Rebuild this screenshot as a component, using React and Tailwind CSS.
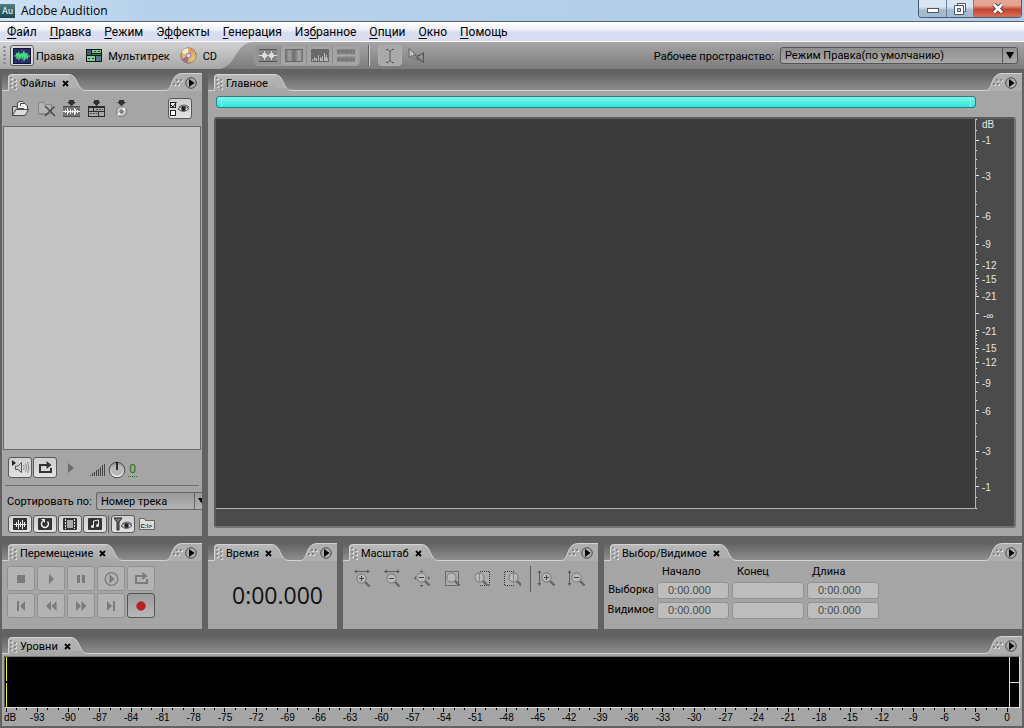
import React, { useState } from "react";

const MENU = [
  ["", "Ф", "айл"],
  ["", "П", "равка"],
  ["", "Р", "ежим"],
  ["Э", "ф", "фекты"],
  ["", "Г", "енерация"],
  ["Из", "б", "ранное"],
  ["", "О", "пции"],
  ["", "О", "кно"],
  ["", "П", "омощь"],
];

// amplitude ruler, one half; the other half is mirrored
const MAJOR_DB = [1, 3, 6, 9, 12, 15, 21];
const MINOR_DB = [0, 0.5, 1.5, 2, 2.5, 4, 5, 7, 8, 10, 11, 13, 14, 16, 17, 18, 19, 20];

function dbToPercent(db, sign) {
  return 50 - sign * 50 * Math.pow(10, -db / 20);
}

/* ---------- icons ---------- */

function Grip() {
  return (
    <svg width="10" height="14" shapeRendering="crispEdges" className="shrink-0">
      {[[1, 1], [1, 5], [1, 9], [5, 3], [5, 7], [5, 11]].map(([x, y]) => (
        <g key={x + "-" + y}>
          <rect x={x + 1} y={y + 1} width="2" height="2" fill="#dedede" />
          <rect x={x} y={y} width="2" height="2" fill="#8c8c8c" />
        </g>
      ))}
    </svg>
  );
}

function EditViewIcon() {
  return (
    <svg width="18" height="16">
      <rect x="0.5" y="0.5" width="17" height="15" fill="#2b2c6b" stroke="#141433" />
      <path d="M9 1V15" stroke="#46489a" />
      <path d="M1 8H3L4 5V11L5 7L6 4V12L7 6V10L8 7L9 5V11L10 7L11 3V13L12 5V11L13 7L14 5V11L15 8H17" fill="none" stroke="#43e079" strokeWidth="1.2" />
    </svg>
  );
}

function MultitrackIcon() {
  return (
    <svg width="16" height="13" shapeRendering="crispEdges">
      <rect width="16" height="13" fill="#161616" />
      <rect x="1" y="1" width="4" height="5" fill="#41597c" />
      <rect x="6" y="1" width="9" height="3" fill="#78c48e" />
      <rect x="8" y="2" width="2" height="1" fill="#1d4d2b" />
      <rect x="12" y="2" width="2" height="1" fill="#1d4d2b" />
      <rect x="6" y="5" width="9" height="1" fill="#4c7f5b" />
      <rect x="1" y="7" width="8" height="5" fill="#86c99a" />
      <rect x="2" y="9" width="2" height="1" fill="#1d4d2b" />
      <rect x="6" y="9" width="2" height="1" fill="#1d4d2b" />
      <rect x="10" y="7" width="5" height="5" fill="#55788a" />
    </svg>
  );
}

function CdIcon() {
  return (
    <svg width="17" height="17" viewBox="0 0 17 17">
      <circle cx="8.5" cy="8.5" r="7.6" fill="#e0b868" stroke="#6a5a3a" strokeWidth="0.8" />
      <path d="M8.5 8.5L1.5 5.5A7.6 7.6 0 0 1 8 1Z" fill="#f6e9c9" />
      <path d="M8.5 8.5L9 1A7.5 7.5 0 0 1 15 5Z" fill="#e8946a" />
      <path d="M8.5 8.5L15.8 8A7.5 7.5 0 0 1 10 15.8Z" fill="#e8bc68" />
      <path d="M8.5 8.5L8 16A7.5 7.5 0 0 1 2 12Z" fill="#a06c90" />
      <circle cx="8.5" cy="8.5" r="2.4" fill="#d7d7e6" stroke="#75688a" strokeWidth="0.8" />
    </svg>
  );
}

function ViewIcon({ kind }) {
  return (
    <svg width="18" height="13">
      <defs>
        <linearGradient id="pan">
          <stop offset="0" stopColor="#6c6c6c" />
          <stop offset="0.25" stopColor="#a0a0a0" />
          <stop offset="0.5" stopColor="#6c6c6c" />
          <stop offset="0.8" stopColor="#a8a8a8" />
          <stop offset="1" stopColor="#6c6c6c" />
        </linearGradient>
      </defs>
      {kind === "wave" && (
        <g>
          <path d="M0 0.5H18M0 12.5H18" stroke="#555" />
          <rect y="1" width="18" height="11" fill="#858585" />
          <path d="M0 6.5H18M3.5 5V8M4.5 4V9M5.5 2V11M6.5 4V9M7.5 5V8M10.5 5V8M11.5 4V9M12.5 2V11M13.5 4V9M14.5 5V8" stroke="#dcdcdc" />
        </g>
      )}
      {kind === "freq" && (
        <g>
          <rect width="18" height="13" fill="url(#pan)" />
          <path d="M0 0.5H18M0 12.5H18" stroke="#666" />
        </g>
      )}
      {kind === "pan" && (
        <g>
          <rect width="18" height="13" fill="#686868" />
          <path d="M1.5 12V10M3.5 12V8M5.5 12V9M7.5 12V6M9.5 12V8M11.5 12V7M13.5 12V4M15.5 12V6M16.5 12V9M4.5 11V9.5M10.5 12V9.5M14.5 12V8" stroke="#b5b5b5" />
        </g>
      )}
      {kind === "phase" && (
        <g>
          <rect width="18" height="13" fill="#858585" />
          <path d="M0 2.5H18M0 10.5H18" stroke="#747474" strokeWidth="2" strokeDasharray="3 1" />
          <path d="M0 6.5H18" stroke="#a8a8a8" strokeWidth="2" />
        </g>
      )}
    </svg>
  );
}

function IBeamIcon() {
  return (
    <svg width="10" height="16" fill="none" stroke="#5a5a5a">
      <path d="M1 1.5H3L5 3.5L7 1.5H9M5 3V13M1 14.5H3L5 12.5L7 14.5H9" />
    </svg>
  );
}

function ScrubIcon() {
  return (
    <svg width="17" height="16">
      <path d="M1 0.5V9.5L3.5 7.5L5.5 11.5L7 10.5L5 7H8Z" fill="#c2c2c2" stroke="#606060" />
      <path d="M9 7.5H11L15.5 4.5V14.5L11 11.5H9Z" fill="#777" stroke="#555" />
      <path d="M11 8.5L14.5 6.5V12.5Z" fill="#9c9c9c" />
    </svg>
  );
}

function OpenIcon() {
  return (
    <svg width="19" height="17" stroke="#4a4a4a">
      <path d="M6.5 8V2.5L9 1.5H12L14.5 4.5V10" fill="#efefef" />
      <path d="M9.5 6V3.5H14L16.5 6V12" fill="#f2f2f2" />
      <path d="M1.5 15.5V6.5H5.5L6.5 8.5H12.5V15.5Z" fill="#c2c2c2" />
      <path d="M1.5 15.5L5 9.5H17.5L14 15.5Z" fill="#dcdcdc" />
    </svg>
  );
}

function RemoveFileIcon() {
  return (
    <svg width="19" height="17">
      <path d="M1.5 13.5V2.5H6.5L8 4.5H14.5V13.5Z" fill="#b4b4b4" stroke="#858585" />
      <path d="M2 14.5H12" stroke="#888" />
      <path d="M8 6L18 16M17.5 6.5L8 16" stroke="#4a4a4a" strokeWidth="1.5" />
    </svg>
  );
}

function InsertArrow() {
  return <path d="M6 0H11V2H13L8.5 6L4 2H6Z" fill="#303030" />;
}

function InsertEditIcon() {
  return (
    <svg width="17" height="17">
      <rect y="6" width="17" height="11" fill="#747474" />
      <path d="M0 6.5H17M0 16.5H17" stroke="#505050" />
      <InsertArrow />
      <path d="M0 11.5H17M2.5 10V13M4.5 8V15M5.5 10V13M7.5 9V14M9.5 10V13M11.5 8V15M12.5 9V14M14.5 10V13" stroke="#f2f2f2" />
    </svg>
  );
}

function InsertMultitrackIcon() {
  return (
    <svg width="17" height="17" shapeRendering="crispEdges">
      <rect y="6" width="17" height="11" fill="#2a2a2a" />
      <InsertArrow />
      <path d="M1 8H5V11H1ZM6 8H16V11H6ZM1 12H10V16H1ZM11 12H16V16H11Z" fill="#a8a8a8" />
      <path d="M8 9.5H15M2 13.5H9" stroke="#444" strokeDasharray="2 1" />
    </svg>
  );
}

function InsertCdIcon() {
  return (
    <svg width="17" height="17">
      <circle cx="8.5" cy="11.5" r="5" fill="#c8c8c8" stroke="#777" />
      <path d="M8.5 11.5L12 8M8.5 11.5L5 15" stroke="#f0f0f0" strokeWidth="2" />
      <circle cx="8.5" cy="11.5" r="1.5" fill="#999" stroke="#555" />
      <InsertArrow />
    </svg>
  );
}

function EyeShape() {
  return (
    <g>
      <path d="M0 5Q5 0 11 4.5Q6 10 0 5Z" fill="#ddd" stroke="#444" />
      <path d="M1 3Q6 -1 11 3" fill="none" stroke="#555" />
      <circle cx="5.5" cy="4.8" r="2.3" fill="#222" />
    </g>
  );
}

function OptionsIcon() {
  return (
    <svg width="20" height="16">
      <rect x="0.5" y="1.5" width="5" height="5" fill="#fff" stroke="#222" />
      <path d="M1 4L3 6L6.5 1" fill="none" stroke="#111" />
      <rect x="0.5" y="9.5" width="5" height="5" fill="#fff" stroke="#222" />
      <g transform="translate(8 3)">
        <EyeShape />
      </g>
    </svg>
  );
}

function SpeakerIcon() {
  return (
    <svg width="19" height="15">
      <path d="M1 0L5 3L1 6Z" fill="#222" />
      <path d="M4.5 6H7L10.5 2.5V12.5L7 9.5H4.5Z" fill="#ccc" stroke="#555" />
      <path d="M12.5 5Q14 7.5 12.5 10M14.5 3.5Q17 7.5 14.5 11.5M16.5 2Q19.5 7.5 16.5 13" fill="none" stroke="#888" />
    </svg>
  );
}

function LoopIcon({ color = "#333" }) {
  return (
    <svg width="15" height="13" viewBox="0 0 15 13">
      <path d="M1 11H14M2 12V4H10M13 12V7" fill="none" stroke={color} strokeWidth="2" />
      <path d="M8.5 0L13.5 4L8.5 8Z" fill={color} />
    </svg>
  );
}

function KnobIcon() {
  return (
    <svg width="18" height="18">
      <defs>
        <linearGradient id="knob" x1="0" y1="0" x2="0" y2="1">
          <stop offset="0" stopColor="#8d8d8d" />
          <stop offset="1" stopColor="#f6f6f6" />
        </linearGradient>
      </defs>
      <circle cx="9" cy="9" r="7.8" fill="url(#knob)" stroke="#4c4c4c" />
      <circle cx="9" cy="9" r="5.5" fill="#b9b9b9" />
      <path d="M9 1V9" stroke="#000" strokeWidth="1.5" />
    </svg>
  );
}

function FilterIcon({ kind }) {
  return (
    <svg width="16" height="14">
      <rect x="1" y="1" width="14" height="12" rx="1" fill="#333" />
      {kind === "audio" && <path d="M2 7.5H14M4.5 5V10M6.5 3V12M8.5 5V10M10.5 3V12M12.5 5V10" stroke="#eee" />}
      {kind === "loop" && (
        <g>
          <path d="M10.5 4.5A3.5 3.5 0 1 1 6 4" fill="none" stroke="#eee" strokeWidth="1.5" />
          <path d="M4 2H8V6Z" fill="#eee" />
        </g>
      )}
      {kind === "video" && (
        <g>
          <rect x="5" y="3" width="6" height="8" fill="#aaa" />
          <path d="M3.5 2V12M12.5 2V12" stroke="#eee" strokeDasharray="2 1" />
        </g>
      )}
      {kind === "midi" && (
        <g fill="#eee">
          <path d="M6.5 9V4L11.5 3V8" fill="none" stroke="#eee" />
          <circle cx="5.5" cy="9.5" r="1.5" />
          <circle cx="10.5" cy="8.5" r="1.5" />
        </g>
      )}
    </svg>
  );
}

function FunnelEyeIcon() {
  return (
    <svg width="20" height="15">
      <path d="M1 1H9L6 5V13H4V5Z" fill="#777" stroke="#222" />
      <g transform="translate(8 4)">
        <EyeShape />
      </g>
    </svg>
  );
}

function TransportIcon({ kind }) {
  const c = "#7b7b7b";
  return (
    <svg width="17" height="16" fill={c}>
      {kind === "stop" && <path d="M4 4H12V12H4Z" />}
      {kind === "play" && <path d="M6 3L11 8L6 13Z" />}
      {kind === "pause" && <path d="M4 4H7V12H4ZM9 4H12V12H9Z" />}
      {kind === "playto" && (
        <g>
          <circle cx="8.5" cy="8" r="6.3" fill="none" stroke={c} strokeWidth="1.3" />
          <path d="M6.5 3.5L11.5 8L6.5 12.5Z" />
        </g>
      )}
      {kind === "start" && <path d="M4 3H6V13H4ZM12 3V13L7 8Z" />}
      {kind === "rew" && <path d="M8 3V13L3 8ZM13.5 3V13L8.5 8Z" />}
      {kind === "ff" && <path d="M3 3V13L8 8ZM8.5 3V13L13.5 8Z" />}
      {kind === "end" && <path d="M4 3V13L9 8ZM10 3H12V13H10Z" />}
      {kind === "rec" && <circle cx="8" cy="8" r="4.3" fill="#c01f1f" stroke="#9b1a1a" strokeWidth="0.6" />}
    </svg>
  );
}

function Lens({ x, y, sign }) {
  return (
    <g>
      <path d={`M${x + 3.5} ${y + 3.5}L${x + 8} ${y + 8}`} stroke="#666" strokeWidth="2.4" />
      <circle cx={x} cy={y} r="4.6" fill="#b9b9b9" stroke="#757575" />
      {sign && <path d={`M${x - 2.5} ${y}H${x + 2.5}`} stroke="#444" />}
      {sign === "+" && <path d={`M${x} ${y - 2.5}V${y + 2.5}`} stroke="#444" />}
    </g>
  );
}

function ZoomIcon({ kind }) {
  const c = "#5e5e5e";
  return (
    <svg width="18" height="19">
      {(kind === "hin" || kind === "hout") && (
        <g>
          <path d="M2 2.5H16" stroke={c} />
          <path d="M1 2.5L4 0.5V4.5ZM17 2.5L14 0.5V4.500Z" fill={c} />
          <Lens x={8.5} y={9.5} sign={kind === "hin" ? "+" : "-"} />
        </g>
      )}
      {kind === "full" && (
        <g>
          <path d="M8.5 1L10.5 3H6.5ZM8.5 18L6.5 16H10.5ZM1 9L3 7V11ZM17 9L15 7V11Z" fill={c} />
          <Lens x={8.5} y={8.5} sign="-" />
        </g>
      )}
      {kind === "sel" && (
        <g>
          <rect x="2.5" y="2.5" width="13" height="14" fill="#acacac" stroke="#333" strokeDasharray="1 1" />
          <Lens x={8.5} y={8.5} />
        </g>
      )}
      {kind === "left" && (
        <g>
          <path d="M7 2.5H16.5V16.5H7" fill="#acacac" stroke="#333" strokeDasharray="1 1" />
          <Lens x={6.5} y={8.5} />
          <path d="M6.5 4.5V12.5" stroke="#555" strokeDasharray="1 1" />
        </g>
      )}
      {kind === "right" && (
        <g>
          <path d="M11 2.5H1.5V16.5H11" fill="#acacac" stroke="#333" strokeDasharray="1 1" />
          <Lens x={10.5} y={8.5} />
          <path d="M10.5 4.5V12.5" stroke="#555" strokeDasharray="1 1" />
        </g>
      )}
      {(kind === "vin" || kind === "vout") && (
        <g>
          <path d="M2.5 3V15" stroke={c} />
          <path d="M2.5 1L4.5 4H0.5ZM2.5 17L0.5 14H4.5Z" fill={c} />
          <Lens x={9.5} y={8.5} sign={kind === "vin" ? "+" : "-"} />
        </g>
      )}
    </svg>
  );
}

/* ---------- panel frame ---------- */

function Panel({ title, closable = true, className = "", children }) {
  return (
    <section className={"flex min-w-0 flex-col " + className}>
      <header className="flex h-[18px] shrink-0 items-end bg-linear-to-b from-[#626262] to-[#919191]">
        <div className="h-px w-1.5 shrink-0 bg-[#d2d2d2]" />
        <div className="flex h-[17px] shrink-0 items-center gap-px rounded-tl-sm border-t border-l border-[#d2d2d2] bg-linear-to-b from-[#bababa] to-[#a5a5a5]">
          <Grip />
          <h2 className="whitespace-nowrap pt-0.5 text-[11px] leading-4 text-black">{title}</h2>
          {closable ? (
            <button aria-label="Закрыть" className="ml-[5px] flex h-4 w-[7px] items-center">
              <svg width="7" height="7" stroke="#000" strokeWidth="1.8">
                <path d="M1 1L6 6M6 1L1 6" />
              </svg>
            </button>
          ) : (
            <span className="w-1.5" />
          )}
        </div>
        <svg width="16" height="18" className="shrink-0">
          <path d="M0 1.5C9 1.5 8 17.5 16 17.5V18H0Z" fill="#b0b0b0" />
          <path d="M0 1.5C9 1.5 8 17.5 16 17.5" fill="none" stroke="#d2d2d2" />
          <path d="M0 18V15H11L14 18Z" fill="#a7a7a7" />
        </svg>
        <div className="h-px min-w-0 flex-1 bg-[#d2d2d2]" />
        <button aria-label="Меню панели" className="shrink-0">
          <svg width="36" height="18" className="block">
            <path d="M0 17.5C7 17.5 4 0.5 16 0.5H36V18H0Z" fill="#aeaeae" />
            <path d="M0 17.5C7 17.5 4 0.5 16 0.5H36" fill="none" stroke="#d2d2d2" />
            <g shapeRendering="crispEdges">
              {[[7, 10], [11, 10], [10, 6], [14, 6]].map(([x, y]) => (
                <g key={x}>
                  <rect x={x + 1} y={y + 1} width="2" height="2" fill="#dedede" />
                  <rect x={x} y={y} width="2" height="2" fill="#858585" />
                </g>
              ))}
            </g>
            <circle cx="25" cy="10" r="5.3" fill="#a9a9a9" stroke="#4e4e4e" />
            <path d="M23 6L28.5 10L23 14Z" fill="#000" />
          </svg>
        </button>
      </header>
      <div className="min-h-0 min-w-0 flex-1 bg-[#a5a5a5]">{children}</div>
    </section>
  );
}

/* ---------- bars on top ---------- */

function TitleBar() {
  return (
    <div className="flex h-[22px] items-start justify-between border-b border-[#56616d] bg-linear-to-r from-[#cfe2f4] from-0% via-[#b4d0eb] via-15% to-[#b2cfea]">
      <div className="flex items-center gap-1.5 pt-1">
        <span className="flex h-[14px] w-[15px] items-center justify-center bg-linear-to-b from-[#4f7f88] to-[#1f4650] text-[9px] leading-3 text-white">Au</span>
        <h1 className="font-['Open_Sans',sans-serif] text-[12px] leading-[14px] text-black">Adobe Audition</h1>
      </div>
      <div className="mr-0.5 flex h-[18px] overflow-hidden rounded-b border border-t-0 border-[#4c5d70]">
        <button aria-label="Свернуть" className="flex w-7 items-center justify-center border-r border-[#6c8096] bg-linear-to-b from-[#d9e5f1] from-40% to-[#a4bad0] to-60%">
          <svg width="12" height="5" className="mt-1">
            <rect x="0.5" y="0.5" width="11" height="4" fill="#fff" stroke="#4d5666" />
          </svg>
        </button>
        <button aria-label="Развернуть" className="flex w-[27px] items-center justify-center border-r border-[#6c8096] bg-linear-to-b from-[#d9e5f1] from-40% to-[#a4bad0] to-60%">
          <svg width="12" height="12" fill="#fff" stroke="#4d5666">
            <path d="M3.5 0.5H11.5V8.5H3.5Z" />
            <path d="M0.5 2.5H9.5V11.5H0.5Z" />
            <path d="M3.5 5.5H6.5V8.5H3.5Z" fill="#c8d6e6" />
          </svg>
        </button>
        <button aria-label="Закрыть окно" className="flex w-[47px] items-center justify-center bg-linear-to-b from-[#e5a696] from-30% via-[#c2432c] via-55% to-[#d8705a]">
          <svg width="12" height="11">
            <path d="M2 1.5L10 9.5M10 1.5L2 9.5" stroke="#4b3038" strokeWidth="4.5" />
            <path d="M2 1.5L10 9.5M10 1.5L2 9.5" stroke="#fff" strokeWidth="2.8" />
          </svg>
        </button>
      </div>
    </div>
  );
}

function MenuBar() {
  return (
    <nav className="flex h-5 items-center border-b border-[#f8f8f8] bg-linear-to-b from-white from-5% via-[#eef1f9] via-40% to-[#d9ddf1] to-55% font-['Roboto',sans-serif] text-[12px] leading-4 text-black">
      {MENU.map(([before, key, after]) => (
        <a key={key + after} href="#" className="pr-1.5 pl-[7px]">
          {before}
          <span className="underline underline-offset-2">{key}</span>
          {after}
        </a>
      ))}
    </nav>
  );
}

function Toolbar() {
  const [view, setView] = useState("wave");

  return (
    <div className="flex h-[27px] bg-linear-to-b from-[#a6a6a6] to-[#7c7c7c] text-black">
      <div className="flex items-center bg-linear-to-b from-[#d2d2d2] to-[#a6a6a6] pl-[3px]">
        <svg width="3" height="20" className="mr-1">
          <path d="M1.5 0V20" stroke="#808080" strokeWidth="2" strokeDasharray="2 2" />
        </svg>
        <button className="flex items-center gap-0.5">
          <span className="flex h-[21px] w-6 items-center justify-center rounded-[3px] border border-[#5c5c5c] bg-[#d8d8d8]">
            <EditViewIcon />
          </span>
          <span className="pt-0.5">Правка</span>
        </button>
        <button className="ml-3 flex items-center gap-1.5">
          <MultitrackIcon />
          <span className="pt-0.5">Мультитрек</span>
        </button>
        <button className="ml-2.5 flex items-center gap-1.5">
          <CdIcon />
          <span className="pt-0.5">CD</span>
        </button>
      </div>
      <svg width="37" height="27" className="shrink-0">
        <defs>
          <linearGradient id="swoosh" x1="0" y1="0" x2="0" y2="1">
            <stop offset="0" stopColor="#d2d2d2" />
            <stop offset="1" stopColor="#a6a6a6" />
          </linearGradient>
        </defs>
        <path d="M0 0H37C17 0 20 27 0 27Z" fill="url(#swoosh)" />
      </svg>
      <div className="flex items-center">
        <div className="flex h-[21px] overflow-hidden rounded border border-[#9c9c9c]">
          {["wave", "freq", "pan", "phase"].map((k) => (
            <button
              key={k}
              aria-label={k}
              onClick={() => setView(k)}
              className={
                "flex w-[26px] items-center justify-center border-r border-[#8c8c8c] last:border-r-0 " +
                (view === k ? "bg-[#949494]" : "bg-[#a4a4a4]")
              }
            >
              <ViewIcon kind={k} />
            </button>
          ))}
        </div>
        <div className="ml-2 h-[21px] w-0.5 border-l border-[#606060] bg-[#d0d0d0]" />
        <button aria-label="Выделение" className="ml-2 flex h-[21px] w-6 items-center justify-center rounded border border-[#b0b0b0] bg-[#a9a9a9]">
          <IBeamIcon />
        </button>
        <button aria-label="Скраб" className="ml-1.5">
          <ScrubIcon />
        </button>
      </div>
      <div className="ml-auto flex items-center gap-1.5 pr-1.5">
        <label htmlFor="workspace" className="pt-0.5">Рабочее пространство:</label>
        <div className="relative">
          <select
            id="workspace"
            className="block h-[17px] w-[238px] appearance-none rounded-[3px] border border-[#555] bg-linear-to-b from-[#8f8f8f] to-[#a9a9a9] pt-px pl-1 text-[11px] leading-[14px]"
          >
            <option>Режим Правка(по умолчанию)</option>
          </select>
          <span className="pointer-events-none absolute inset-y-px right-px flex w-[15px] items-center justify-center border-l border-[#555]">
            <svg width="8" height="7">
              <path d="M0 0H8L4 7Z" />
            </svg>
          </span>
        </div>
      </div>
    </div>
  );
}

/* ---------- panels ---------- */

const LIGHT_BTN = "flex items-center justify-center rounded-[3px] border border-[#5a5a5a] bg-linear-to-b from-[#cfcfcf] to-[#e2e2e2]";

function FilesPanel() {
  return (
    <Panel title="Файлы" className="w-[200px]">
      <div className="flex h-full flex-col">
        <div className="flex h-[35px] shrink-0 items-center gap-2 pr-2.5 pl-[9px]">
          <button aria-label="Открыть файл"><OpenIcon /></button>
          <button aria-label="Закрыть файл" className="-ml-px"><RemoveFileIcon /></button>
          <button aria-label="В правку" className="-ml-px"><InsertEditIcon /></button>
          <button aria-label="В мультитрек"><InsertMultitrackIcon /></button>
          <button aria-label="На CD"><InsertCdIcon /></button>
          <button aria-label="Параметры" className={LIGHT_BTN + " ml-auto h-[21px] w-6"}><OptionsIcon /></button>
        </div>
        <div className="mx-px flex-1 border border-[#6a6a6a] bg-[#c3c3c3]" />
        <div className="flex h-[35px] shrink-0 items-center pl-1.5">
          <button aria-label="Автовоспроизведение" className={LIGHT_BTN + " h-[21px] w-6"}><SpeakerIcon /></button>
          <button aria-label="Цикл" className={LIGHT_BTN + " ml-px h-[21px] w-6"}><LoopIcon /></button>
          <button aria-label="Воспроизвести" className="ml-[11px]">
            <svg width="6" height="10"><path d="M0 0L6 5L0 10Z" fill="#6d6d6d" /></svg>
          </button>
          <svg width="16" height="13" shapeRendering="crispEdges" className="ml-4 mt-1">
            {[0, 1, 2, 3, 4, 5, 6, 7].map((i) => (
              <rect key={i} x={i * 2} y={12 - i * 1.6} width="1" height={1 + i * 1.6} fill="#444" />
            ))}
          </svg>
          <span className="ml-0.5 mt-1"><KnobIcon /></span>
          <a href="#" className="ml-0.5 mt-1 w-[9px] border-b border-dotted border-[#1a7a1a] text-center text-[12px] leading-[13px] text-[#1a7a1a]">0</a>
        </div>
        <div className="mx-[3px] h-px shrink-0 bg-[#6f6f6f]" />
        <div className="flex h-[29px] shrink-0 items-center gap-[3px] overflow-hidden pl-[5px]">
          <label htmlFor="sort" className="w-[86px] shrink-0 whitespace-nowrap pt-0.5">Сортировать по:</label>
          <div className="relative flex-1">
            <select
              id="sort"
              className="block h-[18px] w-full appearance-none rounded-l-[3px] border border-r-0 border-[#666] bg-linear-to-b from-[#999] to-[#b2b2b2] pt-px pl-1 text-[11px] leading-[15px]"
            >
              <option>Номер трека</option>
            </select>
            <span className="pointer-events-none absolute inset-y-px right-0 flex w-2 items-center border-l border-[#666] pl-[3px]">
              <svg width="4" height="5"><path d="M0 0H8L4 6Z" /></svg>
            </span>
          </div>
        </div>
        <div className="flex h-[21px] shrink-0 items-start gap-px pl-1.5">
          {["audio", "loop", "video", "midi"].map((k) => (
            <button key={k} aria-label={k} className={LIGHT_BTN + " h-[18px] w-6"}><FilterIcon kind={k} /></button>
          ))}
          <div className="mr-px h-[18px] w-px bg-[#666]" />
          <button aria-label="Фильтр" className={LIGHT_BTN + " h-[18px] w-6"}><FunnelEyeIcon /></button>
          <button aria-label="Путь" className="ml-0.5 mt-0.5">
            <svg width="18" height="13">
              <path d="M1.5 12.5V1.5H6.5L7.5 3.5H16.5V12.5Z" fill="#dcdcdc" stroke="#666" />
              <text x="2.5" y="10.5" fontSize="6" fontWeight="bold" fontFamily="Liberation Sans" fill="#111">C:\&gt;</text>
            </svg>
          </button>
        </div>
      </div>
    </Panel>
  );
}

function AmplitudeRuler() {
  return (
    <div className="relative mb-[18px] w-[38px] shrink-0 font-['Liberation_Sans',sans-serif] text-[10px] leading-3 text-[#e4e4e4]">
      <span className="absolute left-1.5 top-0">dB</span>
      {[1, -1].map((sign) => (
        <React.Fragment key={sign}>
          {MINOR_DB.map((db) => (
            <i key={db} className="absolute left-0 h-px w-px bg-[#e4e4e4]" style={{ top: dbToPercent(db, sign) + "%" }} />
          ))}
          {MAJOR_DB.map((db) => (
            <div key={db} className="absolute left-0 flex -translate-y-1/2 items-center gap-[3px]" style={{ top: dbToPercent(db, sign) + "%" }}>
              <i className="h-px w-[3px] bg-[#e4e4e4]" />
              <span className="pt-0.5">-{db}</span>
            </div>
          ))}
        </React.Fragment>
      ))}
      <div className="absolute left-0 top-1/2 flex -translate-y-1/2 items-center gap-1">
        <i className="h-px w-[3px] bg-[#e4e4e4]" />
        <span className="pt-1">-∞</span>
      </div>
    </div>
  );
}

function MainPanel() {
  return (
    <Panel title="Главное" closable={false} className="flex-1">
      <div className="flex h-full flex-col px-1.5 pt-[5px] pb-2">
        <div className="mr-10 ml-0.5 flex h-3 shrink-0 justify-between rounded-[3px] border border-[#2e7f7b] bg-linear-to-b from-[#7df3ea] to-[#1de9dc] px-1">
          <span className="w-px bg-[#8ff7f0]" />
          <span className="w-px bg-[#8ff7f0]" />
        </div>
        <div className="mt-[9px] flex flex-1 rounded-[3px] border-2 border-[#747474] border-t-[#5c5c5c] border-l-[#5c5c5c] bg-[#4b4b4b]">
          <div className="mb-[17px] flex-1 border-r border-b border-[#b4b4b4] bg-[#3b3b3b]" />
          <AmplitudeRuler />
        </div>
      </div>
    </Panel>
  );
}

function TransportPanel() {
  const buttons = ["stop", "play", "pause", "playto", "loop", "start", "rew", "ff", "end", "rec"];
  return (
    <Panel title="Перемещение" className="w-[200px]">
      <div className="grid w-fit grid-cols-5 gap-x-0.5 gap-y-0.5 pt-[5px] pl-[5px]">
        {buttons.map((k) => (
          <button
            key={k}
            aria-label={k}
            className={
              "flex h-[25px] w-7 items-center justify-center rounded-[3px] border " +
              (k === "rec"
                ? "border-[#555] bg-linear-to-b from-[#9c9c9c] to-[#b8b8b8]"
                : "border-[#919191] bg-[#b3b3b3]")
            }
          >
            {k === "loop" ? <LoopIcon color="#7b7b7b" /> : <TransportIcon kind={k} />}
          </button>
        ))}
      </div>
    </Panel>
  );
}

function TimePanel() {
  return (
    <Panel title="Время" className="w-[129px]">
      <div className="flex h-full items-center justify-center pl-2.5 font-['Open_Sans',sans-serif] text-[23px] leading-7 text-[#111]">
        0:00.000
      </div>
    </Panel>
  );
}

function ZoomPanel() {
  return (
    <Panel title="Масштаб" className="w-[255px]">
      <div className="flex pt-1 pl-1">
        {["hin", "hout", "full", "sel", "left", "right"].map((k) => (
          <button key={k} aria-label={k} className="flex h-[26px] w-[30px] items-center justify-center"><ZoomIcon kind={k} /></button>
        ))}
        <div className="mt-px ml-[3px] h-[26px] w-px bg-[#5e5e5e]" />
        {["vin", "vout"].map((k) => (
          <button key={k} aria-label={k} className="flex h-[26px] w-[30px] items-center justify-center"><ZoomIcon kind={k} /></button>
        ))}
      </div>
    </Panel>
  );
}

function SelectionPanel() {
  const cols = ["Начало", "Конец", "Длина"];
  const rows = [
    ["Выборка", "0:00.000", "", "0:00.000"],
    ["Видимое", "0:00.000", "", "0:00.000"],
  ];
  return (
    <Panel title="Выбор/Видимое" className="flex-1">
      <table className="table-fixed text-[11px] leading-4">
        <thead>
          <tr>
            <td className="w-[50px]" />
            {cols.map((c) => (
              <th key={c} className="h-[19px] w-[75px] pt-0.5 pl-2 text-left font-normal">{c}</th>
            ))}
          </tr>
        </thead>
        <tbody>
          {rows.map(([name, ...values]) => (
            <tr key={name}>
              <th className="h-5 text-right font-normal">{name}</th>
              {values.map((v, i) => (
                <td key={i} className="pl-[3px]">
                  <input
                    aria-label={name + " " + cols[i]}
                    defaultValue={v}
                    className="block h-[17px] w-[72px] rounded-[3px] border border-[#929292] bg-[#bdbdbd] px-2.5 font-['Liberation_Sans',sans-serif] text-[11px] text-[#4a4a4a]"
                  />
                </td>
              ))}
            </tr>
          ))}
        </tbody>
      </table>
    </Panel>
  );
}

function LevelsPanel() {
  const ticks = Array.from({ length: 97 }, (_, i) => i - 96);
  return (
    <Panel title="Уровни">
      <div className="px-0.5 pt-0.5">
        <div className="flex h-[52px] border-t border-r border-b border-l border-[#dcdcdc] border-t-[#777] border-l-[#555] bg-black pl-px">
          <div className="flex w-px flex-col gap-0.5">
            <div className="flex-1 bg-[#f5ee00]" />
            <div className="flex-1 bg-[#f5ee00]" />
          </div>
          <div className="flex-1" />
          <div className="flex w-[10px] flex-col border-l border-[#dcdcdc]">
            <div className="flex-1 border-b border-[#dcdcdc]" />
            <div className="flex-1" />
          </div>
        </div>
        <div className="relative mr-[13px] ml-0.5 h-[18px] font-['Liberation_Sans',sans-serif] text-[10px] leading-3 text-black">
          {ticks.map((db) => (
            <div
              key={db}
              className="absolute top-0 flex w-6 -translate-x-1/2 flex-col items-center"
              style={{ left: ((db + 96) / 96) * 100 + "%" }}
            >
              <i className={"w-px bg-black " + (db % 3 === 0 ? "h-1" : "h-0.5")} />
              {db % 3 === 0 && <span className={db === -96 ? "pl-2" : ""}>{db === -96 ? "dB" : db}</span>}
            </div>
          ))}
        </div>
      </div>
    </Panel>
  );
}

export default function App() {
  return (
    <div className="flex h-screen min-h-[560px] flex-col overflow-hidden bg-[#626262] font-['Roboto',sans-serif] text-[11px] leading-4 text-black">
      <TitleBar />
      <MenuBar />
      <Toolbar />
      <main className="flex min-h-0 flex-1 flex-col gap-[7px] px-0.5 pt-1 pb-0.5">
        <div className="flex min-h-0 flex-1 gap-1.5">
          <FilesPanel />
          <MainPanel />
        </div>
        <div className="flex h-[86px] shrink-0 gap-1.5">
          <TransportPanel />
          <TimePanel />
          <ZoomPanel />
          <SelectionPanel />
        </div>
        <div className="flex h-[90px] shrink-0 flex-col">
          <LevelsPanel />
        </div>
      </main>
    </div>
  );
}
